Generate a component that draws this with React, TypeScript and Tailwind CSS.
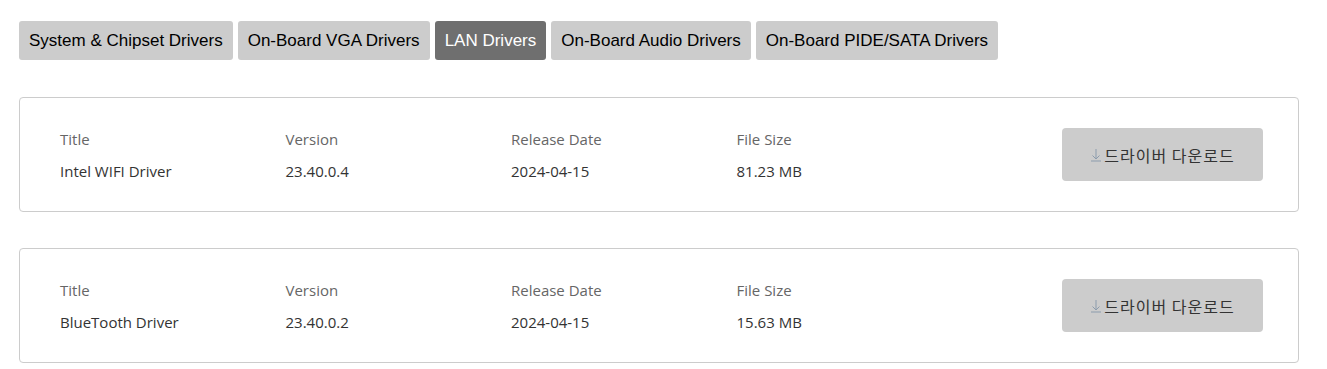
const tabs = [
  'System & Chipset Drivers',
  'On-Board VGA Drivers',
  'LAN Drivers',
  'On-Board Audio Drivers',
  'On-Board PIDE/SATA Drivers',
]

const drivers = [
  { title: 'Intel WIFI Driver', version: '23.40.0.4', date: '2024-04-15', size: '81.23 MB' },
  { title: 'BlueTooth Driver', version: '23.40.0.2', date: '2024-04-15', size: '15.63 MB' },
]

function Field({ label, value }: { label: string; value: string }) {
  return (
    <div className="w-[225.5px] shrink-0">
      <div className="text-[15px] leading-[20px] text-[#666666]">{label}</div>
      <div className="mt-[12px] text-[15px] leading-[20px] text-[#333333]">{value}</div>
    </div>
  )
}

function DownloadIcon() {
  return (
    <svg width="12" height="14" viewBox="0 0 12 14" className="mr-[2px] mt-[1px]">
      <path d="M6 1v10M2.5 7.5L6 11l3.5-3.5M1 13h10" fill="none" stroke="#8c9cad" strokeWidth="1" />
    </svg>
  )
}

export default function App() {
  const active = 'LAN Drivers'
  return (
    <div className="min-h-screen bg-white pl-[19px] pr-[28px] pt-[21px]">
      <div className="flex gap-[5px] font-['Liberation_Sans',Arial,sans-serif]">
        {tabs.map((t) => (
          <button
            key={t}
            className={
              t === active
                ? 'h-[39px] rounded-[3px] bg-[#6f6f6f] px-[10px] text-[17px] text-white'
                : 'h-[39px] rounded-[3px] bg-[#cccccc] px-[10px] text-[17px] text-black'
            }
          >
            {t}
          </button>
        ))}
      </div>
      <div className="mt-[37px] flex flex-col gap-[36px] font-['Open_Sans','Noto_Sans_CJK_KR',sans-serif]">
        {drivers.map((d) => (
          <div
            key={d.title}
            className="flex h-[115px] items-center rounded-[4px] border border-[#cccccc] pl-[40px] pr-[35px]"
          >
            <Field label="Title" value={d.title} />
            <Field label="Version" value={d.version} />
            <Field label="Release Date" value={d.date} />
            <Field label="File Size" value={d.size} />
            <button className="ml-auto flex h-[53px] w-[201px] items-center justify-center rounded-[4px] bg-[#cccccc] text-[16px] tracking-[1px] text-[#333333] font-['Noto_Sans_CJK_KR',sans-serif]">
              <DownloadIcon />
              드라이버 다운로드
            </button>
          </div>
        ))}
      </div>
    </div>
  )
}
